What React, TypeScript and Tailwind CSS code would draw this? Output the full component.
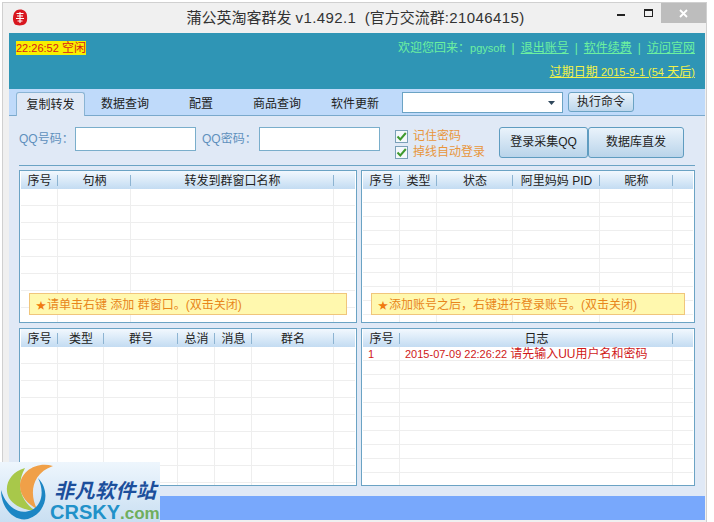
const cjk = "font-['Liberation_Sans','Noto_Sans_CJK_SC',sans-serif]";

type PanelProps = {
  cols: { label: string; w: number }[];
  rowH: number;
  width: number;
  height: number;
  notice?: string;
  children?: React.ReactNode;
};

function Panel({ cols, rowH, width, height, notice, children }: PanelProps) {
  const rows = Array.from({ length: 12 });
  return (
    <div className="relative shrink-0 border border-[#6ba3c4] bg-white overflow-hidden" style={{ width, height }}>
      {/* header */}
      <div className="flex h-[18px] mx-px bg-gradient-to-b from-[#f2f8fe] to-[#c3dcf2] text-[12px] text-[#222]">
        {cols.map((c, i) => (
          <div
            key={i}
            className="relative shrink-0 text-center leading-[20px]"
            style={i < cols.length - 1 ? { width: c.w } : { flex: 1 }}
          >
            {c.label}
            {i < cols.length - 1 && <span className="absolute right-0 top-[4px] h-[11px] w-px bg-[#8db4d2]" />}
          </div>
        ))}
      </div>
      {/* empty grid */}
      <div className="relative h-full overflow-hidden">
        {rows.map((_, r) => (
          <div key={r} className="flex border-b border-[#eeeeee] mx-px" style={{ height: rowH }}>
            {cols.map((c, i) => (
              <div
                key={i}
                className={`shrink-0 ${i < cols.length - 1 ? "border-r border-[#eeeeee]" : "flex-1"}`}
                style={i < cols.length - 1 ? { width: c.w } : undefined}
              >
                {r === 0 ? children && (i === 0 ? <LogCell first /> : i === 1 ? <LogCell /> : null) : null}
              </div>
            ))}
          </div>
        ))}
      </div>
      {notice && (
        <div className="absolute left-[9px] right-[9px] top-[122px] h-[22px] border border-[#f0c67c] bg-[#fff8ae] pl-[6px] text-[12px] leading-[22px] text-[#e8861a] whitespace-nowrap">
          <span className="text-[10px] text-[#f07a10]">★</span>
          <span className="ml-[1px]">{notice}</span>
        </div>
      )}
    </div>
  );
}

function LogCell({ first }: { first?: boolean }) {
  if (first) return <div className="pl-[5px] text-[11px] leading-[15px] text-[#d01818]">1</div>;
  return (
    <div className="pl-[5px] text-[11px] leading-[15px] text-[#d01818] whitespace-nowrap">
      2015-07-09 22:26:22 <span className="text-[12px]">请先输入UU用户名和密码</span>
    </div>
  );
}

function Check({ label }: { label: string }) {
  return (
    <div className="flex items-center gap-[5px] h-[16px]">
      <div className="w-[13px] h-[13px] border border-[#7aa0b8] bg-[#f4f8fb] flex items-center justify-center">
        <svg width="11" height="11" viewBox="0 0 11 11">
          <path d="M1.5 5.5 L4.3 8.5 L9.8 2" fill="none" stroke="#3f9a2e" strokeWidth="2" />
        </svg>
      </div>
      <span className="text-[12px] leading-[16px] text-[#e8963c]">{label}</span>
    </div>
  );
}

function Logo() {
  return (
    <div className="absolute left-0 bottom-0 w-[160px] h-[60px] bg-gradient-to-b from-[#eef6fd] to-[#c9dff2] overflow-hidden">
      <svg width="56" height="60" viewBox="0 0 56 60" className="absolute left-0 top-0">
        <path d="M25 6 C10 10 3 24 9 36 C14 44 24 48 36 49 C24 42 14 26 25 6Z" fill="#a8c84a" />
        <path d="M53 4 C36 -1 20 10 20 24 C20 34 28 42 37 47 C30 34 30 12 53 4Z" fill="#f0a048" />
        <path d="M38 16 C50 28 48 50 28 57 C14 60 1 46 1 28 C6 44 18 54 32 48 C43 42 44 28 38 16Z" fill="#1c86c4" />
      </svg>
      <div className="absolute left-[54px] top-[17px] text-[20px] leading-[24px] font-bold italic text-[#1c4f9c] whitespace-nowrap tracking-[0.5px]">
        非凡软件站
      </div>
      <div className="absolute left-[50px] top-[40px] text-[20px] leading-[20px] font-bold text-[#2191c9] whitespace-nowrap">
        CRSKY<span className="text-[#6fae5e] text-[17px]">.com</span>
      </div>
    </div>
  );
}

export default function App() {
  return (
    <div className={`relative w-[714px] h-[522px] overflow-hidden bg-white pt-[2px] pl-[2px] ${cjk}`}>
      <div className="w-[705px] h-full border-t border-l border-r border-[#d0d0d0] bg-[#f0f0f0] flex flex-col">
        {/* title bar */}
        <div className="relative flex h-[30px] shrink-0 items-center justify-center pl-[2px] text-[15px] text-[#333]">
          <svg width="16" height="17" viewBox="0 0 16 17" className="absolute left-[9px] top-[6px]">
            <path d="M8 0.5 C12 0.5 15 3 15 7 C15.5 11 15 15 11 16 C8 16.8 4 16.5 2.5 15 C0.5 12 0.5 8 2 4 C3.5 1.5 5.5 0.5 8 0.5Z" fill="#d8171f" />
            <path d="M4.5 4.5H11.5M5 7H11M4 9.5H12M8 3V14M5.5 12H10.5" stroke="#fff" strokeWidth="1.1" fill="none" />
          </svg>
          <span className="whitespace-nowrap">
            蒲公英淘客群发 <span className="tracking-[0.4px]">v1.492.1</span>&nbsp;&nbsp;(官方交流群
            <span className="tracking-[0.4px]">:21046415)</span>
          </span>
          <svg width="9" height="3" viewBox="0 0 9 3" className="absolute left-[614px] top-[11px]">
            <rect width="8" height="2" fill="#222" />
          </svg>
          <div className="absolute left-[641px] top-[6px] w-[9px] h-[8px] border border-[#222] border-t-2" />
          <div className="absolute left-[658px] top-0 w-[45px] h-[20px] bg-[#bdbdbd] flex items-center justify-center">
            <svg width="9" height="9" viewBox="0 0 9 9">
              <path d="M1 1L8 8M8 1L1 8" stroke="#fff" strokeWidth="1.8" />
            </svg>
          </div>
        </div>

        <div className="ml-[6px] w-[696px] flex flex-col">
          {/* teal header */}
          <div className="flex h-[56px] justify-between bg-[#2f95b5] pl-[7px] pr-[10px]">
            <div className="pt-[8px]">
              <span className="block bg-[#f7f000] text-[11px] leading-[14px] text-[#d8201c] whitespace-nowrap">
                22:26:52 <span className="text-[12px]">空闲</span>
              </span>
            </div>
            <div className="flex flex-col items-end pt-[7px] text-[12px] leading-[16px] text-[#6df0a0]">
              <div className="flex gap-[6px] whitespace-nowrap">
                <span>
                  欢迎您回来：<span className="text-[11px]">pgysoft</span>
                </span>
                <span>|</span>
                <span className="underline">退出账号</span>
                <span>|</span>
                <span className="underline">软件续费</span>
                <span>|</span>
                <span className="underline">访问官网</span>
              </div>
              <div className="mt-[8px] whitespace-nowrap text-[#f2f24a] underline">
                过期日期 <span className="text-[11px]">2015-9-1 (54</span> 天后<span className="text-[11px]">)</span>
              </div>
            </div>
          </div>

          {/* tabs */}
          <div className="flex h-[27px] items-end bg-[#bfdafa] border-b border-[#7aa9cc] pl-[7px] text-[12px] text-[#222]">
            <div className="w-[69px] h-[24px] -mb-px rounded-t-[3px] border border-b-0 border-[#8ab4d4] bg-[#e0e9f6] text-center leading-[25px]">
              复制转发
            </div>
            <div className="w-[76px] h-[24px] ml-[2px] text-center leading-[26px]">数据查询</div>
            <div className="w-[76px] h-[24px] text-center leading-[26px]">配置</div>
            <div className="w-[76px] h-[24px] text-center leading-[26px]">商品查询</div>
            <div className="w-[80px] h-[24px] text-center leading-[26px]">软件更新</div>
            <div className="ml-[7px] mb-[2px] w-[161px] h-[21px] border border-[#6ba3c4] bg-white flex items-center justify-end pr-[7px]">
              <svg width="7" height="4" viewBox="0 0 7 4">
                <path d="M0 0H7L3.5 4Z" fill="#30485c" />
              </svg>
            </div>
            <div className="ml-[5px] mb-[3px] w-[66px] h-[20px] rounded-[3px] border border-[#6ba3c4] bg-gradient-to-b from-[#eaf3fb] to-[#bcd6ec] text-center leading-[18px] text-[#222]">
              执行命令
            </div>
          </div>

          {/* content */}
          <div className="h-[380px] bg-[#e0e9f6] px-[10px]">
            {/* login row */}
            <div className="flex h-[50px] border-b border-[#6ba3c4] pt-[11px] text-[12px] text-[#5e90bd]">
              <span className="w-[56px] leading-[24px] whitespace-nowrap">QQ号码：</span>
              <div className="w-[121px] h-[24px] border border-[#7aaecb] bg-white" />
              <span className="w-[57px] ml-[6px] leading-[24px] whitespace-nowrap">QQ密码：</span>
              <div className="w-[121px] h-[24px] border border-[#7aaecb] bg-white" />
              <div className="ml-[15px] mt-px">
                <Check label="记住密码" />
                <Check label="掉线自动登录" />
              </div>
              <div className="ml-[14px] flex text-[#222]">
                <div className="w-[89px] h-[31px] rounded-[3px] border border-[#5f9cc0] bg-gradient-to-b from-[#eaf3fb] to-[#b9d4ea] text-center leading-[29px]">
                  登录采集QQ
                </div>
                <div className="w-[96px] h-[31px] rounded-[3px] border border-[#5f9cc0] bg-gradient-to-b from-[#eaf3fb] to-[#b9d4ea] text-center leading-[29px]">
                  数据库直发
                </div>
              </div>
            </div>

            {/* top panels */}
            <div className="mt-[4px] flex gap-[4px]">
              <Panel
                width={338}
                height={153}
                rowH={17}
                cols={[
                  { label: "序号", w: 37 },
                  { label: "句柄", w: 73 },
                  { label: "转发到群窗口名称", w: 203 },
                  { label: "", w: 20 },
                ]}
                notice="请单击右键 添加 群窗口。(双击关闭)"
              />
              <Panel
                width={334}
                height={153}
                rowH={14}
                cols={[
                  { label: "序号", w: 37 },
                  { label: "类型", w: 37 },
                  { label: "状态", w: 76 },
                  { label: "阿里妈妈 PID", w: 87 },
                  { label: "昵称", w: 73 },
                  { label: "", w: 20 },
                ]}
                notice="添加账号之后，右键进行登录账号。(双击关闭)"
              />
            </div>

            {/* bottom panels */}
            <div className="mt-[5px] flex gap-[4px]">
              <Panel
                width={338}
                height={158}
                rowH={17}
                cols={[
                  { label: "序号", w: 37 },
                  { label: "类型", w: 46 },
                  { label: "群号", w: 74 },
                  { label: "总消", w: 37 },
                  { label: "消息", w: 37 },
                  { label: "群名", w: 82 },
                  { label: "", w: 20 },
                ]}
              />
              <Panel
                width={334}
                height={158}
                rowH={14}
                cols={[
                  { label: "序号", w: 37 },
                  { label: "日志", w: 273 },
                  { label: "", w: 20 },
                ]}
              >
                log
              </Panel>
            </div>
          </div>

          {/* status bar */}
          <div className="h-[24px] bg-[#78a8fc]" />
        </div>
      </div>
      <Logo />
    </div>
  );
}
